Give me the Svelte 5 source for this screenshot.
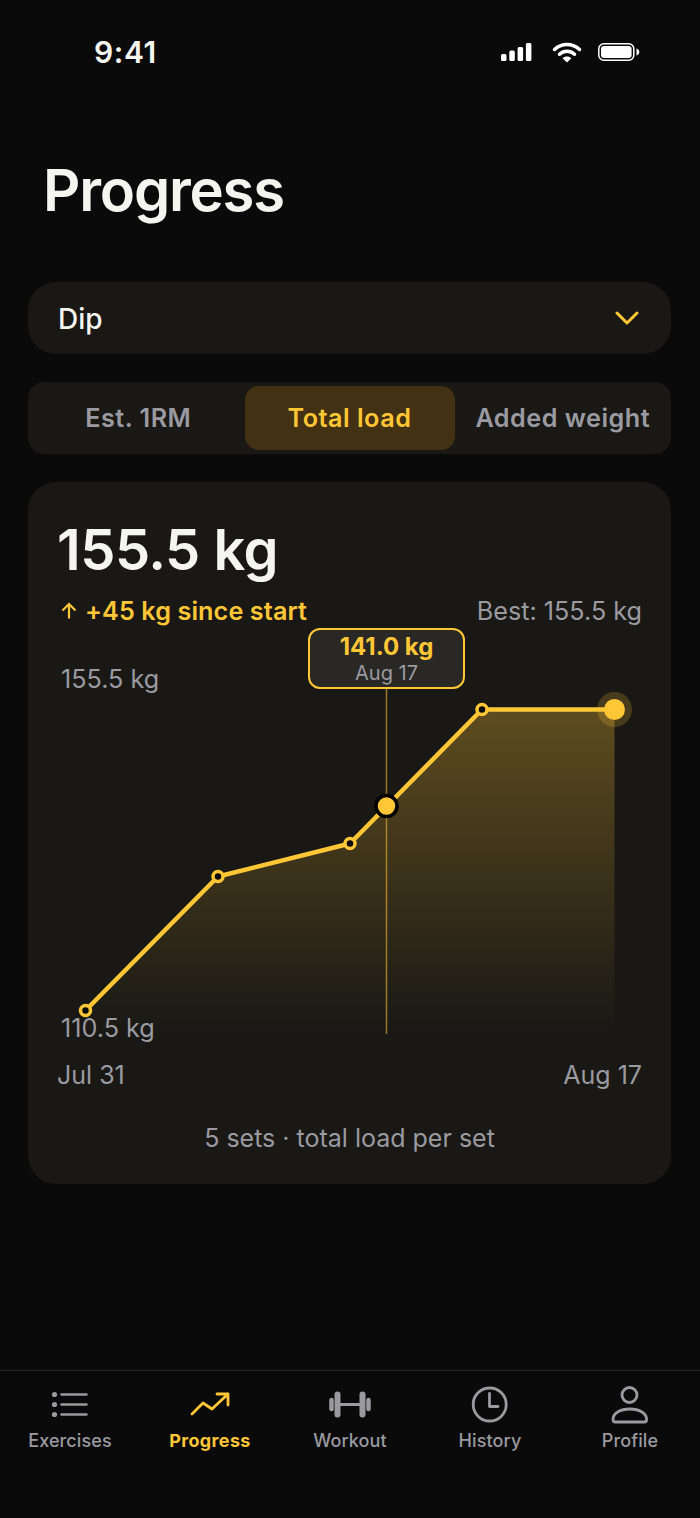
<script>
  const tabs = ['Est. 1RM', 'Total load', 'Added weight'];
  const navItems = ['Exercises', 'Progress', 'Workout', 'History', 'Profile'];

  // chart coordinates, origin at the chart box corner
  const points = [
    [28.5, 370.5],
    [161, 236.5],
    [293, 203.5],
    [425, 69.5],
    [557.5, 69.5]
  ];
  const line = points.map((p) => p.join(',')).join(' ');
  const area = `28.5,394 ${line} 557.5,394`;
</script>

<div class="screen">
  <div class="status">
    <span class="time">9:41</span>
    <div class="status-icons">
      <svg class="signal" width="32" height="20" viewBox="0 0 32 20">
        <rect x="1" y="12" width="5.500" height="7" rx="1.500" />
        <rect x="9.300" y="8.500" width="5.500" height="10.500" rx="1.500" />
        <rect x="17.600" y="5" width="5.500" height="14" rx="1.500" />
        <rect x="25.900" y="1" width="5.500" height="18" rx="1.500" />
      </svg>
      <svg width="30" height="22" viewBox="0 0 30 22">
        <path class="wifi" d="M2.500 8.500C9.500 1.800 20.500 1.800 27.500 8.500" />
        <path class="wifi" d="M7.500 13.200C11.800 9.200 18.200 9.200 22.500 13.200" />
        <path d="M15 21.500 10.600 17.300C13 15 17 15 19.400 17.300Z" />
      </svg>
      <svg width="42" height="18" viewBox="0 0 42 18">
        <rect class="batt-frame" x="0.800" y="0.800" width="35" height="16.400" rx="5" />
        <rect x="3" y="3" width="30.600" height="12" rx="3" />
        <path d="M38.500 5.500v7c1.600-.4 2.800-1.900 2.800-3.500s-1.200-3.100-2.800-3.500z" />
      </svg>
    </div>
  </div>

  <h1>Progress</h1>

  <div class="select">
    <span>Dip</span>
    <svg width="24" height="14" viewBox="0 0 24 14">
      <path d="M2 2l10 10L22 2" />
    </svg>
  </div>

  <div class="tabs">
    {#each tabs as tab, i}
      <div class="tab" class:active={i === 1}>{tab}</div>
    {/each}
  </div>

  <div class="card">
    <div class="value">155.5 kg</div>
    <div class="summary">
      <span class="gain">
        <svg width="18" height="18" viewBox="0 0 18 18">
          <path d="M9 16.500V2M2.500 8.500 9 2l6.500 6.500" />
        </svg>
        +45 kg since start
      </span>
      <span class="best">Best: 155.5 kg</span>
    </div>

    <div class="chart">
      <svg width="585" height="410" viewBox="0 0 585 410">
        <defs>
          <linearGradient id="fill" x1="0" y1="0" x2="0" y2="1">
            <stop offset="0" stop-color="#ffc636" stop-opacity="0.3" />
            <stop offset="1" stop-color="#ffc636" stop-opacity="0" />
          </linearGradient>
        </defs>
        <polygon points={area} fill="url(#fill)" />
        <line x1="329.500" y1="48" x2="329.500" y2="394" stroke="#ffc636" stroke-opacity="0.55" stroke-width="1.500" />
        <polyline points={line} fill="none" stroke="#ffc636" stroke-width="4.500" stroke-linejoin="round" />
        {#each points.slice(0, 4) as p}
          <circle cx={p[0]} cy={p[1]} r="5" fill="#0a0a0a" stroke="#ffc636" stroke-width="3.500" />
        {/each}
        <circle cx="557.500" cy="69.500" r="17.500" fill="#ffc636" fill-opacity="0.2" />
        <circle cx="557.500" cy="69.500" r="10.500" fill="#ffc636" />
        <circle cx="329.500" cy="166" r="10.500" fill="#ffc636" stroke="#000" stroke-width="3.500" />
      </svg>
      <span class="axis top">155.5 kg</span>
      <span class="axis bottom">110.5 kg</span>
      <div class="tooltip">
        <strong>141.0 kg</strong>
        <span>Aug 17</span>
      </div>
    </div>

    <div class="dates">
      <span>Jul 31</span>
      <span>Aug 17</span>
    </div>
    <div class="caption">5 sets · total load per set</div>
  </div>

  <nav class="nav">
    {#each navItems as item, i}
      <div class="nav-item" class:current={i === 1}>
        {#if i === 0}
          <svg width="44" height="44" viewBox="0 0 44 44">
            <circle class="solid" cx="6.500" cy="11.500" r="2.600" />
            <circle class="solid" cx="6.500" cy="21.500" r="2.600" />
            <circle class="solid" cx="6.500" cy="31.500" r="2.600" />
            <path class="line" d="M13.500 11.500h25M13.500 21.500h25M13.500 31.500h25" />
          </svg>
        {:else if i === 1}
          <svg width="44" height="44" viewBox="0 0 44 44">
            <path d="M4 31 15 20l9 6 16-15M29 11h11v11" />
          </svg>
        {:else if i === 2}
          <svg width="44" height="44" viewBox="0 0 44 44">
            <path class="thick" d="M3.500 17v9M40.500 17v9" />
            <path class="heavy" d="M9.500 11.500v20M34.500 11.500v20" />
            <path d="M12 21.500h20" />
          </svg>
        {:else if i === 3}
          <svg width="44" height="44" viewBox="0 0 44 44">
            <circle cx="21.700" cy="21.500" r="16.500" />
            <path d="M21.500 10.500v13H30" />
          </svg>
        {:else}
          <svg width="44" height="44" viewBox="0 0 44 44">
            <circle cx="21.500" cy="12" r="7.500" />
            <path d="M5 36.500c0-6 7-10.500 16.800-10.500s16.800 4.500 16.800 10.500c0 1.800-1 2.500-2.500 2.500H7.500C6 39 5 38.300 5 36.500z" />
          </svg>
        {/if}
        <span>{item}</span>
      </div>
    {/each}
  </nav>
</div>

<style>
  :global(body) {
    background: #0a0a0a;
  }

  .screen {
    height: 1518px;
    box-sizing: border-box;
    display: flex;
    flex-direction: column;
    background: #0a0a0a;
    color: #f5f5f0;
    font-family: Inter, 'Liberation Sans', sans-serif;
  }

  /* ---- status bar ---- */
  .status {
    display: flex;
    align-items: center;
    justify-content: space-between;
    height: 40px;
    padding: 32px 60px 0 94px;
  }

  .time {
    font-size: 30px;
    font-weight: 600;
    letter-spacing: 0.6px;
  }

  .status-icons {
    display: flex;
    align-items: center;
    gap: 16px;
  }

  .status-icons svg {
    fill: #fff;
  }

  .signal {
    margin-right: 4px;
  }

  .wifi {
    fill: none;
    stroke: #fff;
    stroke-width: 3.500;
    stroke-linecap: round;
  }

  .batt-frame {
    fill: none;
    stroke: #fff;
    stroke-width: 1.500;
  }

  h1 {
    margin: 82px 0 0 43px;
    font-size: 58px;
    line-height: 72px;
    font-weight: 600;
    letter-spacing: -1.200px;
  }

  /* ---- exercise select ---- */
  .select {
    display: flex;
    align-items: center;
    justify-content: space-between;
    height: 72px;
    margin: 56px 29px 0 28px;
    padding: 0 32px 0 30px;
    border-radius: 28px;
    background: #191815;
    font-size: 28px;
    font-weight: 500;
  }

  .select span {
    margin-top: 2px;
  }

  .select svg {
    fill: none;
    stroke: #ffc636;
    stroke-width: 3;
    stroke-linecap: round;
    stroke-linejoin: round;
  }

  /* ---- metric tabs ---- */
  .tabs {
    display: grid;
    grid-template-columns: 1fr 210px 1fr;
    height: 72px;
    box-sizing: border-box;
    margin: 28px 29px 0 28px;
    padding: 4px;
    border-radius: 16px;
    background: #191815;
  }

  .tab {
    display: flex;
    align-items: center;
    justify-content: center;
    border-radius: 14px;
    color: #9a9aa0;
    font-size: 25.200px;
    font-weight: 600;
    letter-spacing: 0.5px;
    white-space: nowrap;
  }

  .tab:last-child {
    padding-left: 4px;
  }

  .tab.active {
    background: #423213;
    color: #ffc636;
  }

  /* ---- chart card ---- */
  .card {
    height: 702px;
    box-sizing: border-box;
    margin: 28px 29px 0 28px;
    padding: 34px 29px 0;
    border-radius: 28px;
    background: #191815;
  }

  .value {
    font-size: 56px;
    line-height: 68px;
    font-weight: 600;
    letter-spacing: -0.5px;
  }

  .summary {
    display: flex;
    align-items: center;
    justify-content: space-between;
    margin-top: 11px;
    font-size: 25.200px;
    line-height: 32px;
  }

  .gain {
    display: flex;
    align-items: center;
    gap: 7px;
    color: #ffc636;
    font-weight: 600;
    letter-spacing: 0.1px;
  }

  .gain svg {
    margin-left: 3px;
    fill: none;
    stroke: #ffc636;
    stroke-width: 2.200;
  }

  .best {
    color: #9a9aa0;
  }

  .chart {
    position: relative;
    height: 410px;
    margin-top: 13px;
  }

  .chart svg {
    display: block;
  }

  .axis {
    position: absolute;
    left: 4px;
    color: #9a9aa0;
    font-size: 25.200px;
    line-height: 32px;
  }

  .axis.top {
    top: 23px;
  }

  .axis.bottom {
    top: 372px;
  }

  .tooltip {
    position: absolute;
    top: -12px;
    left: 251px;
    width: 157px;
    height: 61px;
    box-sizing: border-box;
    display: flex;
    flex-direction: column;
    align-items: center;
    justify-content: center;
    border: 2px solid #ffc636;
    border-radius: 12px;
    background: #2a2824;
  }

  .tooltip strong {
    color: #ffc636;
    font-size: 24px;
    line-height: 28px;
    font-weight: 700;
  }

  .tooltip span {
    color: #9a9aa0;
    font-size: 20px;
    line-height: 24px;
  }

  .dates {
    display: flex;
    justify-content: space-between;
    margin-top: 9px;
    color: #9a9aa0;
    font-size: 25px;
    line-height: 32px;
  }

  .caption {
    margin-top: 31px;
    text-align: center;
    color: #9a9aa0;
    font-size: 25px;
    line-height: 32px;
  }

  /* ---- bottom nav ---- */
  .nav {
    display: grid;
    grid-template-columns: repeat(5, 1fr);
    margin-top: auto;
    height: 148px;
    box-sizing: border-box;
    padding-top: 12px;
    border-top: 1px solid #262626;
  }

  .nav-item {
    display: flex;
    flex-direction: column;
    align-items: center;
    color: #9a9aa0;
    font-size: 18px;
    line-height: 24px;
    font-weight: 500;
    letter-spacing: 0.1px;
  }

  .nav-item span {
    margin-top: 2px;
  }

  .nav-item.current {
    color: #ffc636;
    font-weight: 700;
    letter-spacing: 0.35px;
  }

  .nav-item svg {
    fill: none;
    stroke: currentColor;
    stroke-width: 2.800;
    stroke-linecap: round;
    stroke-linejoin: round;
  }

  .nav-item .solid {
    fill: currentColor;
    stroke: none;
  }

  .nav-item .line {
    stroke-width: 2.500;
  }

  .nav-item .thick {
    stroke-width: 4.500;
  }

  .nav-item .heavy {
    stroke-width: 6;
  }
</style>
